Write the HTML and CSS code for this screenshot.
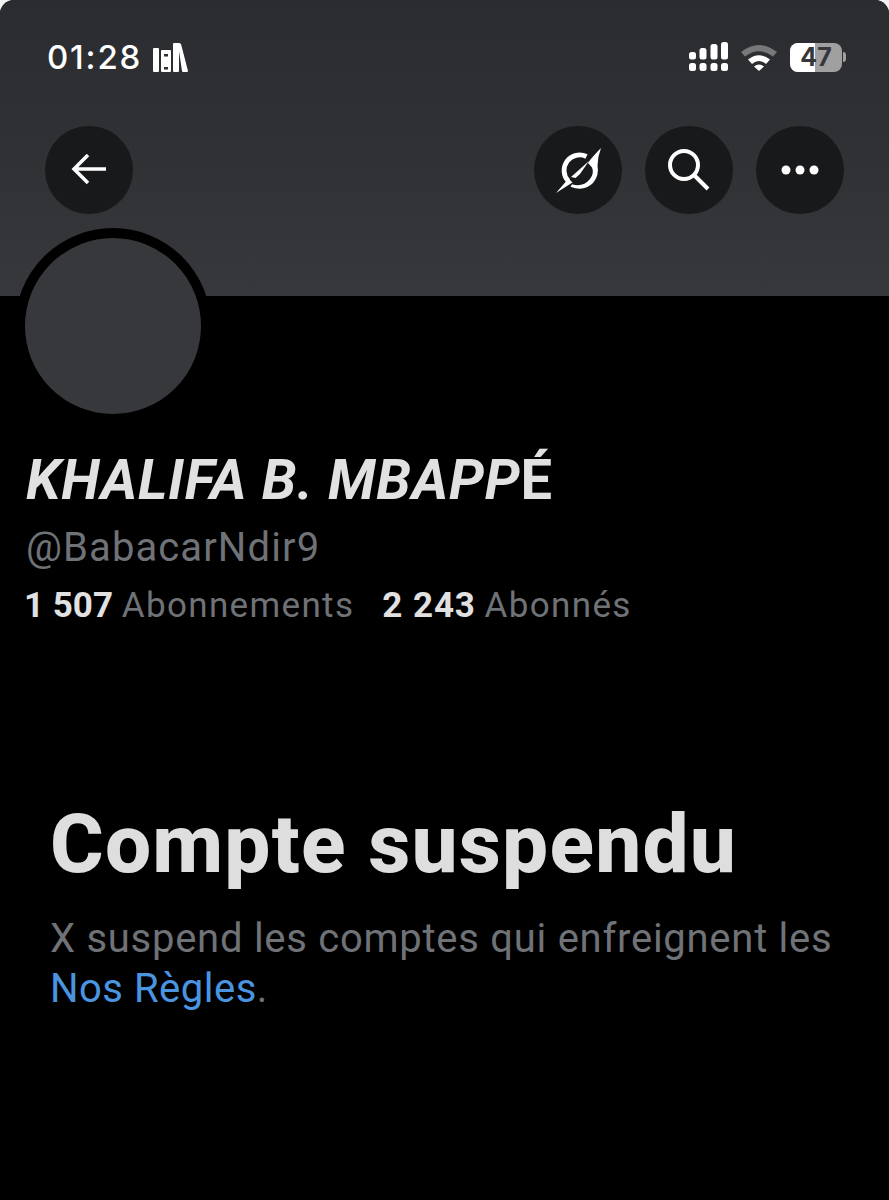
FILE: index.html
```html
<!DOCTYPE html>
<html lang="fr">
<head>
  <meta charset="UTF-8">
  <title>Compte suspendu</title>
  <link rel="stylesheet" href="styles.css">
</head>
<body>

<div id="banner">
  <div id="statusbar">
    <div class="status-left">
      <span class="time">01:28</span>
      <svg class="books" width="36" height="30" viewBox="0 0 36 30">
        <path d="M0 7q0-1 1-1h4q1 0 1 1v22q0 1-1 1H1q-1 0-1-1z" fill="#fff"/>
        <path d="M8 9q0-1 1-1h8q1 0 1 1v20q0 1-1 1H9q-1 0-1-1z" fill="#fff"/>
        <rect x="11" y="12" width="4" height="2.500" fill="#2e2f32"/>
        <rect x="11" y="25" width="4" height="2.500" fill="#2e2f32"/>
        <path d="M20 2q0-1 1-1h5q1 0 2 1l7 27q0 1-1 1h-4q-1 0-1-1L26 9v20q0 1-1 1h-4q-1 0-1-1z" fill="#fff"/>
      </svg>
    </div>
    <div class="status-right">
      <svg class="signal" width="39" height="30" viewBox="0 0 39 30" fill="#fff">
        <rect x="0" y="10" width="7" height="7.500" rx="2.500"/>
        <rect x="10.500" y="6" width="7" height="11.500" rx="2.500"/>
        <rect x="21.500" y="2" width="7" height="15.500" rx="2.500"/>
        <rect x="32" y="0" width="7" height="17.500" rx="2.500"/>
        <rect x="0" y="21" width="7" height="8" rx="2.500"/>
        <rect x="10.500" y="21" width="7" height="8" rx="2.500"/>
        <rect x="21.500" y="21" width="7" height="8" rx="2.500"/>
        <rect x="32" y="21" width="7" height="8" rx="2.500"/>
      </svg>
      <svg class="wifi" width="38" height="28" viewBox="0 0 38 28">
        <path d="M1 9Q19-5 37 9l-4 4.500Q19 3 5 13.500z" fill="#77787a"/>
        <path d="M8 16.500Q19 8 30 16.500l-4 4.500Q19 15 12 21z" fill="#fff"/>
        <path d="M14 23.500Q19 19.500 24 23.500l-5 4.500z" fill="#fff"/>
      </svg>
      <div class="battery">
        <div class="battery-body">
          <div class="battery-fill"></div>
          <span class="battery-num">47</span>
        </div>
        <div class="battery-tip"></div>
      </div>
    </div>
  </div>

  <div id="actions">
    <button class="round">
      <svg width="36" height="32" viewBox="0 0 36 32" fill="none" stroke="#fff" stroke-width="3.500">
        <path d="M35 15H3M17 1 3 15l14 14"/>
      </svg>
    </button>
    <div class="actions-right">
      <button class="round">
        <svg width="88" height="88" viewBox="0 0 88 88">
          <path d="M52.500 30.500A15.500 15.500 0 0 0 34.300 55" fill="none" stroke="#fff" stroke-width="4.800"/>
          <path d="M67 22Q58 31 54 37L58 41.500Q60.500 47 56 53 49 61.500 38 58.300L36.500 60.800Q50 66 59 57 65.500 49 63.500 40 63.500 31 67 22z" fill="#fff"/>
          <path d="M22 67 34.500 52.500 38.500 56.500z" fill="#fff"/>
          <path d="M37 51 55 35 46 48 41.500 52z" fill="#fff"/>
        </svg>
      </button>
      <button class="round">
        <svg width="42" height="42" viewBox="0 0 42 42" fill="none" stroke="#fff" stroke-width="4">
          <circle cx="16" cy="16" r="14"/>
          <path d="M26 26 40 40"/>
        </svg>
      </button>
      <button class="round">
        <svg width="38" height="10" viewBox="0 0 38 10" fill="#fff">
          <circle cx="5" cy="5" r="4.500"/>
          <circle cx="19" cy="5" r="4.500"/>
          <circle cx="33" cy="5" r="4.500"/>
        </svg>
      </button>
    </div>
  </div>
</div>

<div id="perfil">
  <div class="avatar"></div>
  <h1 class="nombre"><i>KHALIFA B. MBAPP</i>É</h1>
  <div class="handle">@BabacarNdir9</div>
  <div class="stats">
    <span><b>1 507</b> <span class="label">Abonnements</span></span>
    <span><b class="wide">2 243</b> <span class="label">Abonnés</span></span>
  </div>
</div>

<div id="suspendu">
  <h2>Compte suspendu</h2>
  <p>X suspend les comptes qui enfreignent les <a href="#">Nos Règles</a>.</p>
</div>

</body>
</html>
```

FILE: styles.css
```css
* {
  margin: 0;
  padding: 0;
  box-sizing: border-box;
}

html {
  background: #f2f2f2;
}

body {
  width: 889px;
  height: 1200px;
  overflow: hidden;
  background: black;
  color: #e1e1e1;
  font-family: Roboto, "Liberation Sans", sans-serif;
  border-radius: 14px 14px 0 0;
}

#banner {
  height: 296px;
  padding: 36px 45px 0 47px;
  background: linear-gradient(#2b2c2f, #303134 50%, #37383b);
  border-radius: 14px 14px 0 0;
}

#statusbar {
  display: flex;
  justify-content: space-between;
  align-items: center;
  height: 42px;
  margin-right: -2px;
}

.status-left {
  display: flex;
  align-items: center;
  gap: 11px;
}

.time {
  color: #fff;
  font-family: Inter, sans-serif;
  font-size: 33px;
  font-weight: 500;
  letter-spacing: 1.800px;
}

.status-right {
  display: flex;
  align-items: center;
  gap: 12px;
}

.battery {
  display: flex;
  align-items: center;
  gap: 1px;
}

.battery-body {
  position: relative;
  width: 52px;
  height: 29px;
  border-radius: 8px;
  background: #a0a0a0;
  overflow: hidden;
}

.battery-fill {
  width: 25px;
  height: 100%;
  background: #fff;
}

.battery-num {
  position: absolute;
  top: 0;
  left: 0;
  width: 100%;
  color: #36373a;
  font-family: Inter, sans-serif;
  font-size: 25px;
  font-weight: 700;
  line-height: 29px;
  text-align: center;
}

.battery-tip {
  width: 3px;
  height: 10px;
  border-radius: 0 3px 3px 0;
  background: #a0a0a0;
}

#actions {
  display: flex;
  justify-content: space-between;
  margin: 47.500px 0 0 -2px;
}

.actions-right {
  display: flex;
  gap: 23px;
}

.round {
  display: flex;
  align-items: center;
  justify-content: center;
  width: 88px;
  height: 88px;
  border: none;
  border-radius: 50%;
  background: #18191b;
}

#perfil {
  padding: 0 26px;
}

.avatar {
  width: 196px;
  height: 196px;
  margin: -68px 0 0 -11px;
  border: 10px solid black;
  border-radius: 50%;
  background: #37383c;
}

.nombre {
  margin-top: 23px;
  font-size: 56px;
  line-height: 66px;
  font-weight: 700;
  letter-spacing: 0.700px;
  color: #e1e1e1;
}

.handle {
  margin-top: 11px;
  font-size: 40px;
  line-height: 48px;
  letter-spacing: 1.100px;
  color: #6f7276;
}

.stats {
  display: flex;
  gap: 28px;
  margin: 12px 0 0 -2px;
  font-size: 35px;
  line-height: 44px;
  color: #6f7276;
}

.stats b {
  color: #e1e1e1;
}

.stats .wide {
  letter-spacing: 0.900px;
}

.label {
  letter-spacing: 1.350px;
}

#suspendu {
  padding: 171px 50px 0;
}

h2 {
  font-size: 82px;
  line-height: 90px;
  font-weight: 800;
  letter-spacing: 1.200px;
  color: #dedede;
}

p {
  margin-top: 25px;
  width: 800px;
  font-size: 40px;
  line-height: 50px;
  letter-spacing: 0.730px;
  color: #6f7276;
}

a {
  color: #4a94e0;
  letter-spacing: 0.500px;
  text-decoration: none;
}
```
